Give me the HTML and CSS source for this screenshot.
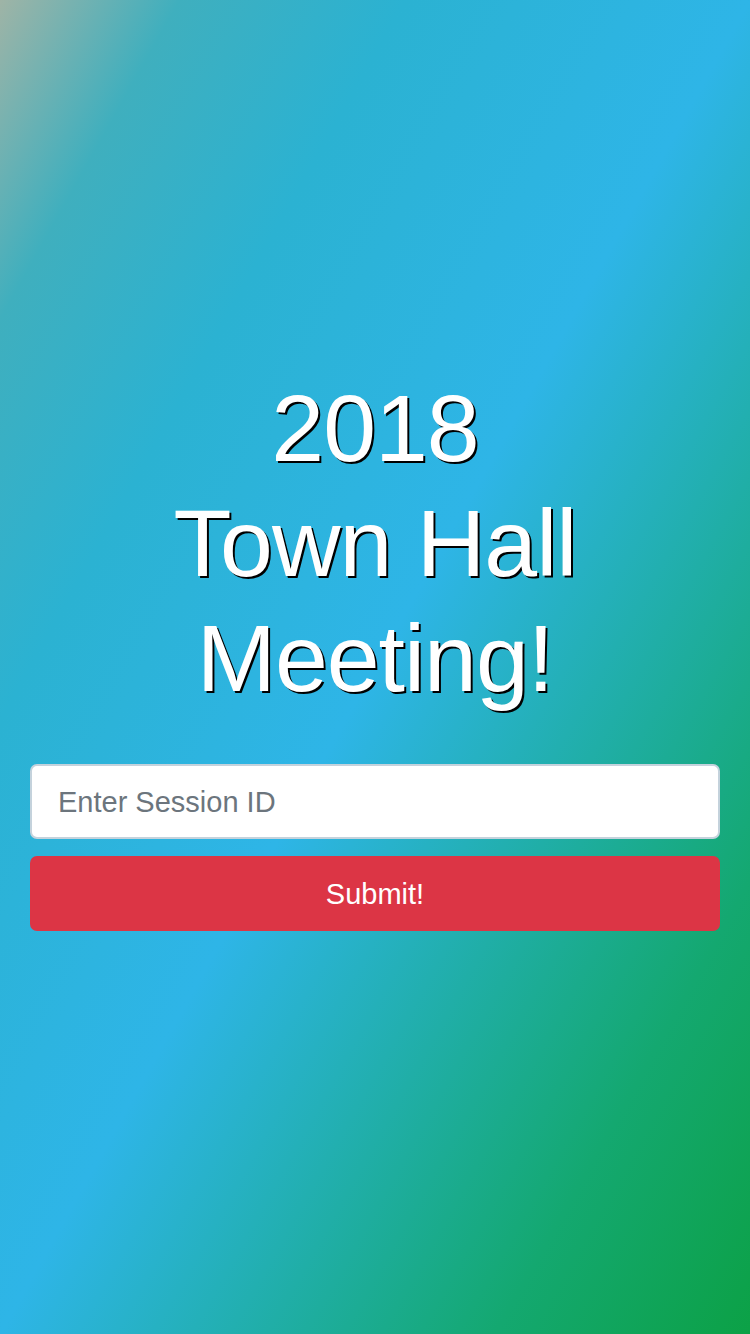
FILE: index.html
```html
<!DOCTYPE html>
<html lang="en">
<head>
<meta charset="utf-8">
<title>2018 Town Hall Meeting!</title>
<link rel="stylesheet" href="styles.css">
</head>
<body>
<main class="page">
  <section class="content">
    <h1 class="title">2018<br>Town Hall<br>Meeting!</h1>
    <form class="session-form">
      <input class="session-input" type="text" placeholder="Enter Session ID">
      <button class="submit-btn" type="button">Submit!</button>
    </form>
  </section>
</main>
</body>
</html>
```

FILE: styles.css
```css
html, body {
  margin: 0;
  padding: 0;
  height: 100%;
}

body {
  font-family: "Liberation Sans", Arial, sans-serif;
  background: linear-gradient(to bottom right,
    #9fb4a6 0%,
    #3fafbe 12%,
    #2bb2d2 27%,
    #2eb5e7 50%,
    #14a870 83%,
    #0ca146 100%);
  background-attachment: fixed;
}

.page {
  min-height: 100vh;
  box-sizing: border-box;
  display: flex;
  flex-direction: column;
  justify-content: center;
  padding: 0 30px 32px 30px;
}

.content {
  display: flex;
  flex-direction: column;
}

.title {
  margin: 0 0 48px 0;
  font-size: 95px;
  font-weight: 400;
  line-height: 115px;
  color: #ffffff;
  text-align: center;
  text-shadow: 2px 2px 0 #000000;
  letter-spacing: -1px;
}

.session-form {
  display: flex;
  flex-direction: column;
  gap: 17px;
}

.session-input {
  box-sizing: border-box;
  height: 75px;
  width: 100%;
  padding: 2px 26px 0 26px;
  font-family: inherit;
  font-size: 29px;
  color: #495057;
  background: #ffffff;
  border: 2px solid #c4d2dc;
  border-radius: 7px;
  outline: none;
}

.session-input::placeholder {
  color: #6c757d;
  opacity: 1;
}

.submit-btn {
  box-sizing: border-box;
  height: 75px;
  width: 100%;
  padding-top: 3px;
  font-family: inherit;
  font-size: 29px;
  color: #ffffff;
  background: #dc3545;
  border: none;
  border-radius: 7px;
  cursor: pointer;
}
```
